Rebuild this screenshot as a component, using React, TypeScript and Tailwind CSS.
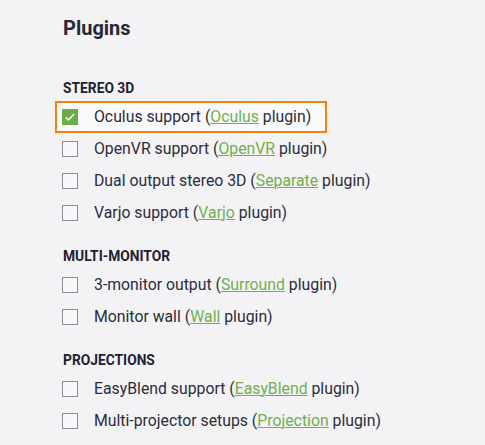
const sections = [
  {
    title: "STEREO 3D",
    items: [
      { label: "Oculus support", link: "Oculus", checked: true },
      { label: "OpenVR support", link: "OpenVR" },
      { label: "Dual output stereo 3D", link: "Separate" },
      { label: "Varjo support", link: "Varjo" },
    ],
  },
  {
    title: "MULTI-MONITOR",
    items: [
      { label: "3-monitor output", link: "Surround" },
      { label: "Monitor wall", link: "Wall" },
    ],
  },
  {
    title: "PROJECTIONS",
    items: [
      { label: "EasyBlend support", link: "EasyBlend" },
      { label: "Multi-projector setups", link: "Projection" },
    ],
  },
];

type Item = { label: string; link: string; checked?: boolean };

function Checkbox({ checked }: { checked?: boolean }) {
  if (checked)
    return (
      <span className="flex h-4 w-4 items-center justify-center bg-[#6aac45]">
        <svg viewBox="0 0 16 16" className="h-3 w-3" fill="none">
          <path d="M2.5 8.5 L6 12 L13.5 4" stroke="white" strokeWidth="2" />
        </svg>
      </span>
    );
  return <span className="block h-4 w-4 border border-[#8c8c94] bg-[#f8f8fa]" />;
}

function Row({ item }: { item: Item }) {
  return (
    <div
      className={
        item.checked
          ? "-ml-2 flex h-8 w-[272px] items-center gap-4 border-2 border-[#f5820f] bg-[#f9f9fb] pl-[5px]"
          : "-ml-[1px] flex h-8 items-center gap-4"
      }
    >
      <Checkbox checked={item.checked} />
      <span className="text-[15.8px] text-[#2b2d3a]">
        {item.label} (
        <a className="text-[#70b04c] underline underline-offset-[1px] decoration-1">{item.link}</a>{" "}
        plugin)
      </span>
    </div>
  );
}

export default function App() {
  return (
    <div className="min-h-[445px] bg-[#f3f3f6] pl-[63px] pt-[14px] font-['Roboto',sans-serif]">
      <h1 className="text-[20px] font-bold leading-7 text-[#262936]">Plugins</h1>
      <div className="mt-[38px] flex flex-col gap-[19px]">
        {sections.map((s) => (
          <div key={s.title}>
            <h2 className="text-[13.8px] font-bold leading-4 text-[#1f2130]">{s.title}</h2>
            <div className="mt-[5px] flex flex-col">
              {s.items.map((it) => (
                <Row key={it.label} item={it} />
              ))}
            </div>
          </div>
        ))}
      </div>
    </div>
  );
}
